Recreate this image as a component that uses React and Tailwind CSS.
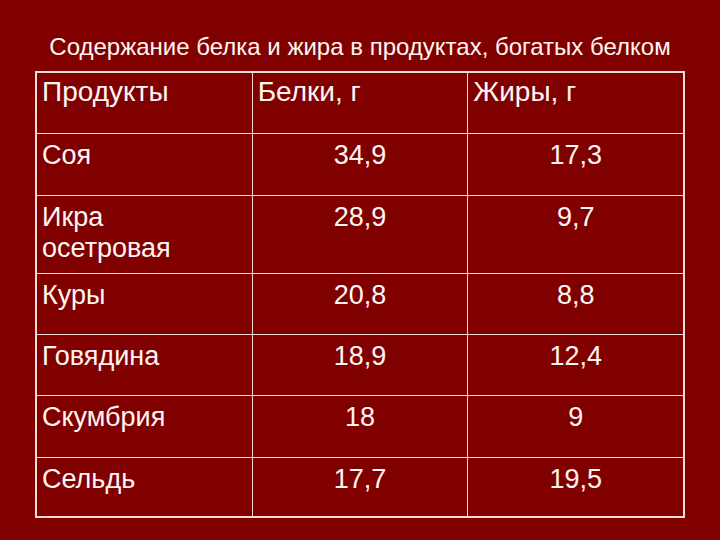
import React from 'react';

const rows = [
  ['Соя', '34,9', '17,3', 'h-[61px]'],
  ['Икра осетровая', '28,9', '9,7', 'h-[77px]'],
  ['Куры', '20,8', '8,8', 'h-[60px]'],
  ['Говядина', '18,9', '12,4', 'h-[60px]'],
  ['Скумбрия', '18', '9', 'h-[61px]'],
  ['Сельдь', '17,7', '19,5', 'h-[58px]'],
];

const App = () => {
  return (
    <div
      className="w-[720px] h-[540px] bg-[#800000] text-[#fff6f4] overflow-hidden"
      style={{ fontFamily: '"Liberation Sans", Arial, sans-serif' }}
    >
      <div className="h-[71px] pt-[33px] text-center text-[24px] leading-[28px]">
        Содержание белка и жира в продуктах, богатых белком
      </div>

      <div className="ml-[35px] w-[650px] border-2 border-[#f3dcd8] bg-[#f3dcd8]">
        <div className="grid grid-cols-3 gap-px">
          <div className="h-[60px] bg-[#800000] pl-[5px] pt-[3px] text-[28px] leading-[32px]">
            Продукты
          </div>
          <div className="h-[60px] bg-[#800000] pl-[5px] pt-[3px] text-[28px] leading-[32px]">
            Белки, г
          </div>
          <div className="h-[60px] bg-[#800000] pl-[5px] pt-[3px] text-[28px] leading-[32px]">
            Жиры, г
          </div>

          {rows.map(([name, protein, fat, h]) => (
            <React.Fragment key={name}>
              <div className={`${h} bg-[#800000] pl-[5px] pt-[6px] pr-[40px] text-[27px] leading-[31px]`}>
                {name}
              </div>
              <div className={`${h} bg-[#800000] pt-[6px] text-center text-[27px] leading-[31px]`}>
                {protein}
              </div>
              <div className={`${h} bg-[#800000] pt-[6px] text-center text-[27px] leading-[31px]`}>
                {fat}
              </div>
            </React.Fragment>
          ))}
        </div>
      </div>
    </div>
  );
};

export default App;
